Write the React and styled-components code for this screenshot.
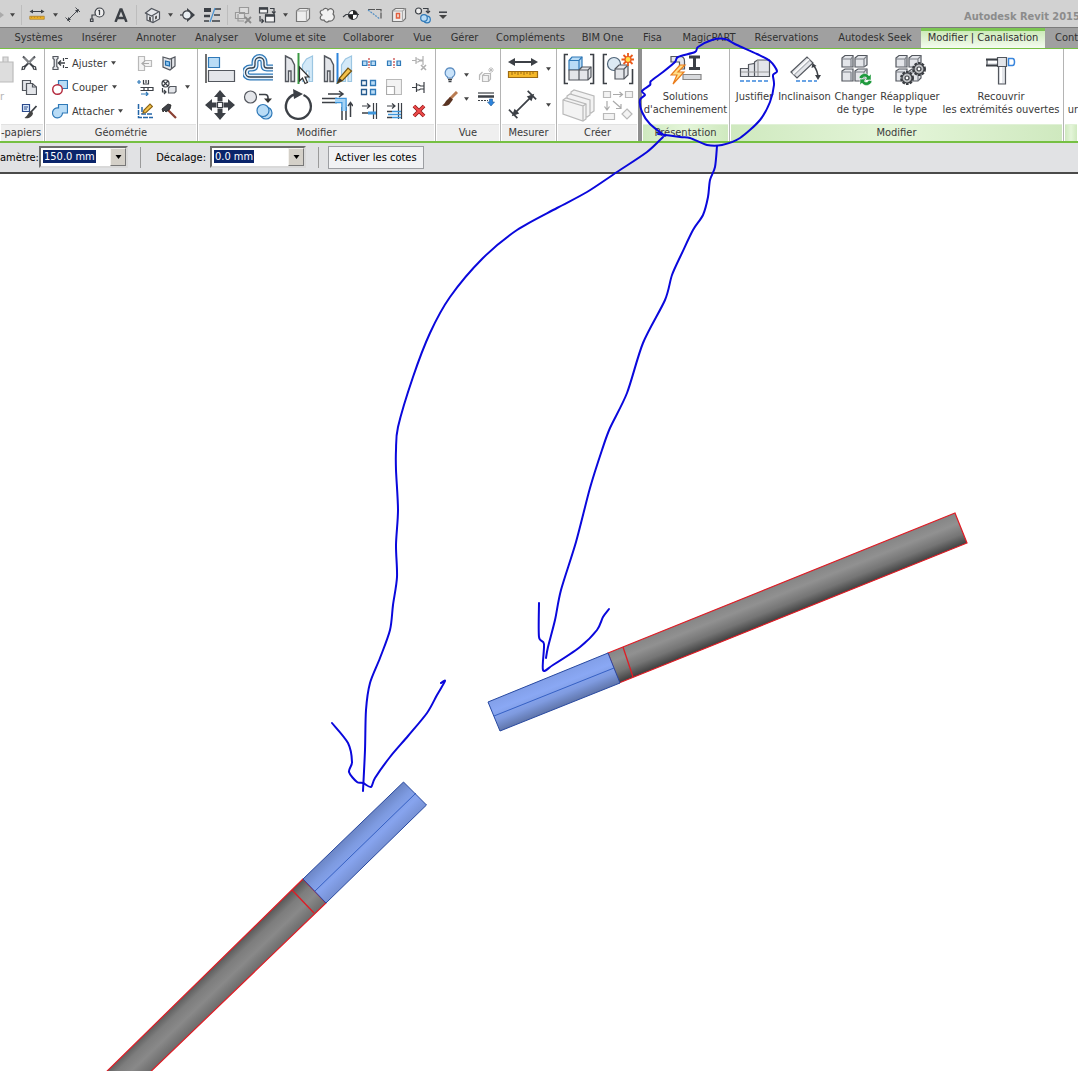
import React from 'react';
import styled, { createGlobalStyle, css } from 'styled-components';

const GlobalStyle = createGlobalStyle`
  * { box-sizing: border-box; }
  body { margin: 0; background: #fff; }
  body, button, input {
    font-family: "DejaVu Sans Condensed", Roboto, "Liberation Sans", sans-serif;
    font-size: 11px;
    line-height: 13px;
  }
  button { margin: 0; padding: 0; border: 0; background: none; color: inherit; white-space: nowrap; }
  svg { display: block; flex: none; }
`;

const Page = styled.div`
  position: relative;
  display: flex;
  flex-direction: column;
  min-height: 100vh;
  overflow: hidden;
  color: #3a3a3a;
`;

/* ---------- quick access bar ---------- */
const QuickBar = styled.header`
  display: flex;
  align-items: center;
  height: 28px;
  padding-top: 3px;
  background: #d2d2d2;
  border-bottom: 1px solid #7c7c7c;
  overflow: hidden;
`;
const QuickButton = styled.button`
  display: flex;
  flex: none;
  align-items: center;
  justify-content: center;
  width: ${(p) => p.$width || 24}px;
  height: 22px;
`;
const ArrowButton = styled.button`
  display: flex;
  flex: none;
  align-items: center;
  justify-content: center;
  width: 12px;
  height: 22px;
`;
const Divider = styled.span`
  flex: none;
  width: 1px;
  height: 20px;
  margin: 0 3px;
  background: #bdbdbd;
`;
const AppTitle = styled.h1`
  flex: none;
  width: 114px;
  margin: 2px 0 0 auto;
  font-size: 11px;
  font-weight: bold;
  color: #8c8c8c;
  white-space: nowrap;
`;

/* ---------- tabs ---------- */
const Tabs = styled.nav`
  display: flex;
  height: 20px;
  padding-left: 5px;
  background: #a0a0a0;
  overflow: hidden;
`;
const Tab = styled.button`
  flex: none;
  width: ${(p) => p.$width}px;
  height: 20px;
  padding: 0 0 1px ${(p) => (p.$clipped ? 10 : 0)}px;
  color: #303030;
  text-align: ${(p) => (p.$clipped ? 'left' : 'center')};
  ${(p) => p.$active && css`
    padding-bottom: 4px;
    border-top: 3px solid #7cc653;
    background: linear-gradient(#cdebb9, #f4fbef);
  `}
`;

/* ---------- ribbon ---------- */
const Ribbon = styled.div`
  display: flex;
  height: 95px;
  border-top: 1px solid #76c043;
  border-bottom: 2px solid #76c043;
  background: #fff;
  overflow: hidden;
`;
const PanelBox = styled.section`
  display: flex;
  flex-direction: column;
  flex: ${(p) => (p.$width ? `0 0 ${p.$width}px` : '1 0 0')};
  min-width: 0;
  border-right: ${(p) => (p.$edge ? '4px solid #8f8f8f' : '1px solid #b4b4b4')};
  &:last-child { border-right: 0; }
`;
const PanelBody = styled.div`
  display: flex;
  align-items: ${(p) => (p.$center ? 'center' : 'flex-start')};
  justify-content: ${(p) => p.$justify || 'flex-start'};
  height: 75px;
  padding: 2px 0 1px ${(p) => p.$inset || 0}px;
  overflow: hidden;
`;
const PanelName = styled.h2`
  height: 17px;
  margin: 0 1px;
  padding: 1px ${(p) => (p.$align ? 4 : 0)}px 0 0;
  background: ${(p) => (p.$green ? 'linear-gradient(90deg, #cfe9bf, #e4f5d9, #cfe9bf)' : '#efefef')};
  border-top: 1px solid ${(p) => (p.$green ? '#e0f1d6' : '#e2e2e2')};
  font-size: 11px;
  font-weight: normal;
  line-height: 13px;
  text-align: ${(p) => p.$align || 'center'};
  white-space: nowrap;
`;
const Column = styled.div`
  display: flex;
  flex-direction: column;
  flex: none;
  width: ${(p) => p.$width}px;
`;
const Row = styled.div`
  display: flex;
  align-items: center;
  gap: ${(p) => p.$gap || 0}px;
  height: 24px;
`;
const TextTool = styled.button`
  display: flex;
  align-items: center;
  gap: 4px;
  height: 24px;
`;
const IconGrid = styled.div`
  display: grid;
  flex: none;
  grid-template-columns: repeat(${(p) => p.$columns}, ${(p) => p.$cell}px);
  grid-auto-rows: ${(p) => p.$row}px;
`;
const IconTool = styled.button`
  display: flex;
  align-items: center;
  justify-content: center;
`;
const BigTool = styled.button`
  display: flex;
  flex-direction: column;
  flex: none;
  align-items: center;
  gap: 4px;
  width: ${(p) => p.$width}px;
  height: 72px;
  padding-top: 3px;
  color: ${(p) => (p.$faint ? '#b4b4b4' : 'inherit')};
  line-height: 13px;
`;

/* ---------- options bar ---------- */
const Options = styled.form`
  display: flex;
  align-items: center;
  height: 31px;
  padding-bottom: 1px;
  background: #e1e2e4;
  border-bottom: 2px solid #4a4a4a;
  color: #000;
`;
const FieldLabel = styled.label`
  flex: none;
  width: ${(p) => p.$width}px;
  padding-right: 4px;
  text-align: right;
  white-space: nowrap;
`;
const Combo = styled.span`
  display: flex;
  flex: none;
  width: ${(p) => p.$width}px;
  height: 22px;
  border: 2px solid;
  border-color: #6c6c6c #d9d9d9 #d9d9d9 #6c6c6c;
  background: #fff;
`;
const ComboText = styled.input`
  field-sizing: content;
  height: 13px;
  margin: 2px auto 0 2px;
  padding: 0 1px;
  border: 0;
  background: #0a246a;
  color: #fff;
`;
const ComboButton = styled.button`
  display: flex;
  align-items: center;
  justify-content: center;
  width: 16px;
  border: 1px solid;
  border-color: #f4f2ee #777 #777 #f4f2ee;
  background: #d4d0c8;
`;
const OptionDivider = styled.span`
  width: 1px;
  height: 21px;
  margin: 0 ${(p) => p.$after}px 0 12px;
  background: #9a9a9a;
`;
const PlainButton = styled.button`
  height: 23px;
  padding: 0 6px;
  border: 1px solid #9c9ea2;
  background: #f1f2f4;
  color: #000;
`;

/* ---------- drawing area ---------- */
const Canvas = styled.main`
  flex: 1 0 0;
  min-height: 0;
  overflow: hidden;
  background: #fff;
`;
const Ink = styled.svg`
  position: absolute;
  top: 0;
  left: 0;
  pointer-events: none;
`;

/* ---------- icons ---------- */
const S = ({ w = 18, h, vb, children }) => (
  <svg width={w} height={h || w} viewBox={vb || `0 0 ${w} ${h || w}`} fill="none" stroke="#3c4046" strokeWidth="1.2" aria-hidden="true">
    {children}
  </svg>
);
const Caret = ({ color = '#444', w = 5 }) => (
  <svg width={w} height="4" viewBox="0 0 6 4" aria-hidden="true"><path d="M0 0h6L3 4z" fill={color} /></svg>
);
const Blue = { fill: '#b9dcf6', stroke: '#2f79b8' };
const Grey = { fill: '#e4e6ea', stroke: '#53575e' };
const Faint = { fill: '#f3f3f3', stroke: '#b9b9b9' };

const Ruler = ({ w }) => (
  <S w={w} h={w * 0.75} vb="0 0 32 24">
    <path d="M4 5h24" strokeWidth="2" />
    <path d="M1 5l7-4v8zM31 5l-7-4v8z" fill="#3c4046" stroke="none" />
    <path d="M1.500 14.500h29v6h-29z" fill="#f5b829" stroke="#9d6b12" />
    <path d="M5 15v3M8 15v2M11 15v3M14 15v2M17 15v3M20 15v2M23 15v3M26 15v2" stroke="#9d6b12" strokeWidth="1" />
  </S>
);
const Dimension = ({ w }) => (
  <S w={w} vb="0 0 32 32">
    <path d="M7 25L25 7M1 21l9 9M21 1l9 9" strokeWidth="1.800" />
    <path d="M4 28l3-8 5 5zM28 4l-3 8-5-5z" fill="#3c4046" stroke="none" />
  </S>
);
const TagIcon = () => (
  <S w={16}><circle cx="10.500" cy="5.500" r="4.500" fill="#eee" /><path d="M10.500 3v5M9.500 4l1-1" /><path d="M6.500 8H3V12" /><path d="M1.500 12h2.500v2.500H1.500z" /></S>
);
const LetterIcon = () => (
  <S w={14}><path d="M1.500 14L6.500 1.500h1L12.500 14M4 10h6" strokeWidth="2.400" /></S>
);
const HouseIcon = () => (
  <S w={17}><path d="M1.500 6l6-4.500 8 3.500v7L9 15.500 3 13V7z" {...Grey} /><path d="M1.500 6l6 3 7-4M9 9v6.500" stroke="#53575e" /><path d="M5 9.500v4l2 .8v-4zM11 9.500l2-1v3l-2 1z" fill="#555" stroke="none" /></S>
);
const SectionIcon = () => (
  <S w={16}><path d="M7 1l8 7-8 7z" fill="#3c4046" stroke="none" /><circle cx="7" cy="8" r="4.200" fill="#e9eef2" /><path d="M0 8h3" /></S>
);
const ThinLines = () => (
  <S w={18} h={16}><path d="M1 3h7" strokeWidth="4" /><path d="M1 9h6" strokeWidth="2.500" /><path d="M1 14h5M12 2h6M11 8h6M9 14h8" strokeWidth="1.500" /><path d="M12 1L7 15" stroke="#4a94d4" /></S>
);
const CloseWindows = () => (
  <S w={18}><path d="M5.500 1.500h9v6h-9zM1.500 6.500h9v6h-9z" fill="#ddd" stroke="#999" /><path d="M4 8v7h6" stroke="#999" /><path d="M11 11l6 6M17 11l-6 6" stroke="#8a8a8a" strokeWidth="1.800" /></S>
);
const SwitchWindows = () => (
  <S w={18}><path d="M1.500 2h8v5h-8zM7.500 9h9v7h-9z" fill="#f3f3f3" /><path d="M1 2.500h9M7 9.500h10" strokeWidth="2.500" /><path d="M12 2.500h4v5M14 5.500l2 2 1.500-2M2 10v5h3M3.500 13l2 2-2 2" /></S>
);
const CubeIcon = ({ red }) => (
  <S w={16}><path d="M1.500 4l3-2.500h10v10l-3 3h-10z" fill="#ededed" stroke="#777" /><path d="M1.500 4h10v10.500M11.500 4l3-2.500" stroke="#aaa" />{red && <path d="M5.500 6.500h3v4.500H5.500z" stroke="#e2603f" strokeWidth="1.500" />}</S>
);
const CloudIcon = () => (
  <S w={17}><path d="M4 3c2-3 5-1 5 0 3-3 7 0 5 4 3 3 0 8-4 7-2 2-4 1-5-1-4 1-5-3-2-5C0 6 1 3 4 3z" fill="#f1f1f1" stroke="#666" /></S>
);
const LevelIcon = () => (
  <S w={18}><circle cx="11" cy="9" r="4.500" fill="#fff" /><path d="M11 9V4.500A4.500 4.500 0 0 1 15.500 9zM11 9v4.500A4.500 4.500 0 0 1 6.500 9z" fill="#222" stroke="none" /><path d="M1 11l3-2.500h13" /></S>
);
const DashIcon = () => (
  <S w={16}><path d="M1 2.500h13v9" stroke="#555" strokeDasharray="7 1" /><path d="M1 3l12 9" stroke="#5590c4" strokeDasharray="2 1" /></S>
);
const CirclesIcon = () => (
  <S w={18}><circle cx="4.500" cy="5" r="3" fill="#eee" /><path d="M9 2.500h5v4M12 5l2 2 2-2" /><circle cx="13" cy="13.500" r="3.300" {...Blue} /><circle cx="10" cy="12" r="3.300" {...Blue} /></S>
);
const MoreIcon = () => (
  <S w={8} h={8}><path d="M0 1.200h8" strokeWidth="1.500" /><path d="M0 4h8L4 8z" fill="#444" stroke="none" /></S>
);
const RedoEnd = () => (
  <S w={6} h={10}><path d="M0 2l4 3-4 3z" fill="#aaa" stroke="none" /></S>
);

const CutIcon = () => <S w={16}><path d="M2 1.500L12.500 12M14 1.500L3.500 12" strokeWidth="2" /><path d="M3 2.500l6 6M13 2.500l-6 6" stroke="#fff" strokeWidth=".7" /><path d="M12 11l2.500 1 .5 2.500-2.500-.5zM4 11l-2.500 1-.5 2.500 2.500-.5z" /></S>;
const CopyIcon = () => <S w={16}><path d="M1.500 1.500h8v10h-8z" {...Grey} /><path d="M5.500 4.500h6l4 3.500v7.500h-10z" {...Grey} /><path d="M11.500 4.500V8h4" stroke="#53575e" /></S>;
const MatchIcon = () => <S w={16}><path d="M1.500 1.500h7v7h-7z" fill="#dcebfa" stroke="#2b4a8c" /><path d="M3 4h4M3 6h3" stroke="#2b4a8c" /><path d="M15.500 3L10 9" strokeWidth="1.800" /><path d="M10.500 8c-3 0-3 4-7 7 4 1 8-1 8.500-5z" fill="#444" stroke="none" /></S>;
const CopeIcon = () => <S w={16}><path d="M1 1.500h5v2L4.800 4.500v7L6 12.500v2H1v-2l1.200-1v-7L1 3.500z" {...Grey} /><path d="M16 3.500h-4.500v3M16 12.500h-4.500v-3" strokeDasharray="3 1" /><path d="M6.500 8H13M9 5.500L6.500 8 9 10.500" strokeWidth="1.500" /></S>;
const CutGeometry = () => <S w={16}><path d="M6.500 1.500h9v8h-9z" {...Blue} /><circle cx="5.500" cy="10.500" r="4.800" fill="#fff" stroke="#b3283c" strokeWidth="1.400" /></S>;
const JoinGeometry = () => <S w={16}><path d="M6.500 1.500h9v8.500h-5a5 5 0 1 1-4-5z" {...Blue} /></S>;
const WallJoin = () => <S w={16}><path d="M1.500 1.500h6v4h7v6h-7v4h-6z" {...Faint} /><path d="M12 8.500H5M8 6L5 8.500 8 11" stroke="#aaa" /></S>;
const FaceIcon = () => <S w={16}><path d="M2 2l7 2 5-2v9l-5 4-7-3z" {...Grey} /><path d="M4.500 6l4 1v4l-4-1z" fill="#8cc6f2" stroke="#1f6cab" /><path d="M10.500 4v10" stroke="#53575e" /></S>;
const BeamIcon = () => <S w={18}><path d="M1 4h4M3 2v4" stroke="#2f79b8" /><path d="M7.500 2v4h5V2M10 2v3M4.500 9.500H17v3H4.500M8 9.500v3M12 9.500v3" /><path d="M5 16h7M10 14l2 2-2 2" stroke="#2f79b8" /></S>;
const SplitFace = () => <S w={16}><circle cx="4.500" cy="4.500" r="3.500" /><path d="M2 2l5 5M7 2L2 7" /><path d="M7.500 9l1.500-1.500h6v5L13.500 14h-6z" {...Grey} /><path d="M1.500 9v4h3M3 11l2 2-2 2" /></S>;
const WallPencil = () => <S w={16}><path d="M1.500 1v13.500H16M5 4v7h11" stroke="#2466a8" strokeWidth="1.500" strokeDasharray="5 1" /><path d="M6 10l1-3 6-6 2.500 2.500-6.500 6z" fill="#f3c24b" stroke="#8d6516" /></S>;
const HammerIcon = () => <S w={16}><path d="M6 6l9 9" stroke="#8a4033" strokeWidth="2.200" /><path d="M1 6l6-5 3 1-1 4-4 3-1.500-1.500L2 9z" fill="#3f4247" stroke="#222" strokeWidth=".8" /></S>;

const AlignIcon = () => <S w={32}><path d="M2 1v29" stroke="#111" /><path d="M4.500 4.500h11v10h-11z" {...Blue} /><path d="M4.500 17.500h26v11h-26z" {...Grey} /></S>;
const offsetCurve = 'M30 24H7a4.500 4.500 0 0 1 0-9h2q3 0 3-3V9a4.500 4.500 0 0 1 9 0v3q0 3 3 3h6';
const OffsetIcon = () => <S w={32}><path d={offsetCurve} stroke="#2f79b8" strokeWidth="7" /><path d={offsetCurve} stroke="#e8f3fc" strokeWidth="4.500" /><path d={offsetCurve} stroke="#34414e" strokeWidth="1.300" /></S>;
const MirrorIcon = ({ pencil }) => <S w={32}><path d="M3.500 3l6 3 3 6v16.500H9V18H6.500v10.500h-3z" {...Grey} strokeWidth="1.400" /><path d="M30.500 3l-6 3-4 6v16.500h4V18H27v10.500h3.500z" fill="#d3e9f8" stroke="#9cc6e2" /><path d="M16.500 0v31" stroke={pencil ? '#2d84dc' : '#3b9a44'} strokeWidth="2" />{pencil ? <g><path d="M16.500 30l2-5L27 15l3.500 3-9 9.500z" fill="#f3c24b" stroke="#75540f" /><path d="M16.500 30l2-5 3 2.500z" fill="#333" stroke="none" /></g> : <path d="M17.500 14v14l3-3 2.500 5.500 2.500-1-2.500-5.500h4z" fill="#fff" stroke="#333" />}</S>;
const MoveIcon = () => <S w={32}><path d="M16 1l6 7h-3.500v4.500h-5V8H10zM16 31l6-7h-3.500v-4.500h-5V24H10zM1 16l7-6v3.500h4.500v5H8V22zM31 16l-7-6v3.500h-4.500v5H24V22z" fill="#3c4046" stroke="none" /><path d="M13.500 13.500h5v5h-5z" fill="#fff" /></S>;
const CopyShapes = () => <S w={32}><circle cx="7.500" cy="8" r="6" {...Grey} /><path d="M16 5.500h6q3 0 3 3v2" strokeWidth="1.600" /><path d="M21 9.500h8l-4 4.500z" fill="#333" stroke="none" /><circle cx="23" cy="24" r="6" {...Blue} /><circle cx="20" cy="21.500" r="6" {...Blue} /></S>;
const RotateIcon = () => <S w={32}><path d="M21.500 6a12.500 12.500 0 1 1-9-.5" strokeWidth="2.400" /><path d="M11 0l10 5-9 5z" fill="#3c4046" stroke="none" /></S>;
const TrimIcon = () => <S w={32}><path d="M1 9.500h15M1 13.500h15M21 18v13M25 18v13" strokeWidth="1.500" /><path d="M14 11.500h9V22" stroke="#3f97dc" strokeWidth="5.500" /><path d="M14 11.500h9V22" stroke="#a7d4f5" strokeWidth="3" /><path d="M7 5h14M18 2l4 3-4 3M29.500 28V14M27 17l2.500-3.500L32 17" strokeWidth="1.500" /></S>;
const SplitIcon = ({ gap }) => <S w={16}><path d={gap ? 'M1.500 6H5v4.500H1.500zM11 6h3.500v4.500H11z' : 'M1.500 6H6v4.500H1.500zM10 6h4.500v4.500H10z'} {...Blue} /><path d="M8 3v10" stroke="#c43c3c" strokeDasharray="2 1" /></S>;
const PinIcon = ({ off }) => <S w={16}>{off ? <g stroke="#b0b0b0"><path d="M1 5.500h4M5 2v7M12 1v9M5 4h2l1.500 1H12M5 7h2l1.500-1H12" /><path d="M10 10l5 5M15 10l-5 5" strokeWidth="1.600" /></g> : <path d="M1 8.500h4M5.500 4v9M13 3v11M5.500 6H8l1.500 1H13M5.500 11H8l1.500-1H13" />}</S>;
const ArrayIcon = () => <S w={17}><path d="M1.500 1.500h5v5h-5zM1.500 10.500h5v5h-5z" fill="#eef4f9" stroke="#245a8e" strokeWidth="1.300" /><path d="M10.500 1.500h5v5h-5zM10.500 10.500h5v5h-5z" {...Blue} strokeWidth="1.300" /></S>;
const ScaleIcon = () => <S w={16}><path d="M.5.500h15v15H.5z" {...Faint} /><path d="M.5 7.500h8v8h-8z" fill="#fff" stroke="#aaa" /></S>;
const TrimOne = ({ many }) => <S w={18}><path d="M2 4h8M7 1.500L10 4 7 6.500M13.500 1v16M16.500 1v16" /><path d={many ? 'M2 9.500h5M2 15.500h5' : 'M2 11h6'} strokeWidth="1.500" /><path d={many ? 'M7 9.500h9M7 15.500h9M3 12.500h13' : 'M8 11h8'} stroke="#3f97dc" strokeWidth={many ? 1.4 : 3} /></S>;
const DeleteIcon = () => <S w={14}><path d="M2 2l10 10M12 2L2 12" stroke="#8f1a1a" strokeWidth="3.800" /><path d="M2 2l10 10M12 2L2 12" stroke="#ee4a4a" strokeWidth="2.200" /></S>;
const BulbIcon = () => <S w={16}><path d="M8 .8a5 5 0 0 1 2.500 9.200V11h-5v-1A5 5 0 0 1 8 .8z" fill="#c9e3fa" stroke="#5b8cc0" /><path d="M6 12.500h4M6.500 14.500h3" strokeWidth="1.500" /></S>;
const HideIcon = () => <S w={16}><path d="M4.500 8.500h6v6h-6zM4.500 8.500l2-2h6v5.500l-2 2.500M1.500 13V8l3-3" {...Faint} /><path d="M13 0v6M10 3h6M11 1l4 4M15 1l-4 4" stroke="#b5b5b5" strokeWidth=".8" /></S>;
const BrushIcon = () => <S w={16}><path d="M15 1L8 8" stroke="#b97c52" strokeWidth="3" /><path d="M8 6L4 10c-1 2-2 3-4 4.500 4 1 7 0 8-2l3-4z" fill="#593322" stroke="none" /></S>;
const LineStyle = () => <S w={18}><path d="M1 3h16" strokeWidth="1.200" /><path d="M1 6.500h16" strokeWidth="2.500" /><path d="M1 10.500h10" strokeDasharray="2 1" /><path d="M12.500 9h3v3h2L14 16l-3.500-4h2z" fill="#2d84dc" stroke="#1b5a9c" strokeWidth=".6" /></S>;
const GroupIcon = () => <S w={32}><path d="M5 1.500H1.500v29H5M27 1.500h3.500v29H27" strokeWidth="1.600" /><path d="M6 7.500L9 4h10v10l-3 3H6z" {...Blue} /><path d="M6 7.500h10L19 4M16 7.500V17" stroke="#2f79b8" /><path d="M6 17h10v10H6zM16 17l3-3h9v10l-3 3h-9z" {...Grey} /><path d="M16 17h9v10M25 17l3-3" stroke="#53575e" /></S>;
const AssemblyIcon = () => <S w={32}><path d="M5 1.500H1.500v29H5M27 30.500h3.500V16" strokeWidth="1.600" /><circle cx="12" cy="11" r="6.500" fill="#dce9f3" stroke="#4f6478" /><path d="M13 16l4-4h9v10l-4 4h-9z" {...Grey} /><path d="M13 16h9v10M22 16l4-4" stroke="#53575e" /><path d="M26 0v13M19.500 6.500h12.500M21.500 2l9 9M30.500 2l-9 9" stroke="#ea5a1b" strokeWidth="1.800" /><circle cx="26" cy="6.500" r="3" fill="#ffe14a" stroke="#ea5a1b" /></S>;
const PartsIcon = () => <S w={34}><path d="M9 4l3-2 20 6v15l-3 2-20-6z" {...Faint} /><path d="M5 8l3-2 20 6v15l-3 2-20-6z" {...Faint} /><path d="M1 12l3-2 20 6v15l-3 2L1 26z" {...Faint} /><path d="M1 12l20 6v15M21 18l3-2" stroke="#b9b9b9" /></S>;
const GraphIcon = () => <S w={32}><path d="M1.500 2.500h7v6h-7zM23.500 2.500h7v6h-7zM1.500 24.500h11v6h-11zM25 20l5 5-5 5-5-5z" {...Faint} /><path d="M11 5.500h9M17.500 3l3 2.500-3 2.500M5 12v8M2.500 17.500L5 21l2.500-3.500M11 12l8 7M19 15v4.500h-5" stroke="#aaa" /></S>;
const RouteIcon = () => <S w={32}><path d="M1 2.500h9q4.500 0 4.500 4.500v8h-5V8H1z" {...Grey} /><path d="M19 3h11M19 14.500h11M24.500 3v12" strokeWidth="3" /><path d="M13 20.500h18v5H13z" fill="#d8dadd" stroke="#888" /><path d="M10 11L1 21h6l-4 9 11-12H8l7-7z" fill="#ffe08a" stroke="#ea7d1c" /></S>;
const JustifyIcon = () => <S w={32}><path d="M1.500 14.500h8v8h-8zM9.500 10.500l6-1v13h-6zM15.500 8l3-2h12v16.500h-15z" {...Grey} /><path d="M2 18h28M19 6v16" stroke="#999" /><path d="M1 27h30" stroke="#3a86dd" strokeWidth="1.500" strokeDasharray="4 2" /></S>;
const SlopeIcon = () => <S w={32}><path d="M2 18L18 3l6 6L8 24z" {...Grey} /><path d="M5 21L21 6" stroke="#aeb2b8" /><path d="M4 20L20 5" stroke="#fff" /><path d="M7 27h21" stroke="#3a86dd" strokeWidth="1.500" strokeDasharray="4 2" /><path d="M25 12c3 4 4 7 4 12" strokeWidth="1.500" /><path d="M22.500 14l1-5 4 3zM26 21h6l-3 5z" fill="#3c4046" stroke="none" /></S>;
const Cubes = () => <g><path d="M2 4l3-2.500h8V13H2zM15 4l3-2.500h9V11l-3 2h-9zM2 17l3-2h8v12H2zM15 17l3-2h9v9l-3 3h-9z" {...Grey} /><path d="M2 5h9l2-3M15 5h9l3-3M24 5v8M2 18h9M11 5v8M11 18v9M15 18h9l3-3M24 18v9" stroke="#7b7f86" /></g>;
const ChangeType = () => <S w={32}><Cubes /><path d="M19 24c1-5 8-6 10-2l2-2v6h-6l2-2c-2-2-4-1-5 1zM32 27c-1 5-8 6-10 2l-2 2v-6h6l-2 2c2 2 4 1 5-1z" fill="#1f9a3d" stroke="#fff" strokeWidth=".5" /></S>;
const Gear = ({ x, y }) => <g transform={`translate(${x} ${y})`}><circle r="6" stroke="#3a3d42" strokeWidth="2" strokeDasharray="2.600 1.200" /><circle r="5" fill="#bfc1c4" stroke="#3a3d42" /><circle r="2" fill="#fff" stroke="#3a3d42" /></g>;
const ReapplyType = () => <S w={32}><Cubes /><Gear x={25} y={15} /><Gear x={13} y={24} /></S>;
const CapIcon = () => <S w={32}><path d="M2 5.500h12v6H2z" {...Grey} /><path d="M13.500 10h7v20h-7z" {...Grey} /><path d="M12.500 3.500h9v9h-9z" {...Grey} /><path d="M3 8h9M16 13v16" stroke="#fff" strokeWidth="2" /><path d="M1 5.500h12M1 11.500h12" strokeWidth="1.800" /><path d="M23.500 4.500h4q2 0 2 3.500t-2 3.500h-4z" fill="#fff" stroke="#3a86dd" strokeWidth="1.500" /></S>;
const PasteIcon = () => <S w={32}><path d="M9 8h18v20H9zM17 8V3h5v5" fill="#ddd" stroke="#bbb" /></S>;

/* ---------- data ---------- */
const tabs = [
  ['Systèmes', 67], ['Insérer', 54], ['Annoter', 60], ['Analyser', 61], ['Volume et site', 87],
  ['Collaborer', 69], ['Vue', 39], ['Gérer', 45], ['Compléments', 87], ['BIM One', 57],
  ['Fisa', 43], ['MagicPART', 70], ['Réservations', 85], ['Autodesk Seek', 92],
  ['Modifier | Canalisation', 124], ['Cont', 60],
];
const modifyBig = [
  ['Aligner', AlignIcon], ['Décaler', OffsetIcon], ['Symétrie', MirrorIcon],
  ['Symétrie dessinée', () => <MirrorIcon pencil />],
  ['Déplacer', MoveIcon], ['Copier', CopyShapes], ['Rotation', RotateIcon], ['Ajuster', TrimIcon],
];
const modifySmall = [
  ['Scinder', SplitIcon], ['Scinder avec espace', () => <SplitIcon gap />], ['Libérer', () => <PinIcon off />],
  ['Réseau', ArrayIcon], ['Échelle', ScaleIcon], ['Verrouiller', PinIcon],
  ['Prolonger', TrimOne], ['Prolonger plusieurs', () => <TrimOne many />], ['Supprimer', DeleteIcon],
];
const geometry = [['Ajuster', CopeIcon], ['Couper', CutGeometry], ['Attacher', JoinGeometry]];
const layoutTools = [
  [['Justifier'], JustifyIcon, 47], [['Inclinaison'], SlopeIcon, 53], [['Changer', 'de type'], ChangeType, 49],
  [['Réappliquer', 'le type'], ReapplyType, 60], [['Recouvrir', 'les extrémités ouvertes'], CapIcon, 122],
];

const strokes = [
  [[665, 136], [650, 124], [642, 112], [640, 100], [645, 95], [642, 91], [650, 85], [651, 81], [663, 72], [675, 62], [678, 57], [695, 52], [698, 47], [712, 40], [725, 39], [737, 45], [757, 54], [770, 61], [777, 71], [773, 75], [774, 85], [770, 102], [760, 120], [740, 138], [722, 145], [707, 145], [690, 138], [680, 137], [658, 134]],
  [[663, 137], [647, 152], [617, 172], [587, 192], [557, 208], [517, 230], [483, 258], [450, 297], [430, 333], [413, 377], [398, 427], [396, 450], [396, 470], [398, 510], [396, 545], [397, 577], [393, 605], [390, 630], [380, 658], [370, 683], [366, 710], [365, 750], [363, 791]],
  [[717, 146], [715, 167], [710, 180], [708, 197], [703, 215], [693, 230], [682, 253], [672, 275], [665, 300], [643, 343], [627, 393], [610, 428], [602, 450], [590, 488], [576, 542], [561, 590], [555, 620], [548, 647], [546, 658]],
  [[539, 603], [539, 637], [544, 644], [543, 670], [553, 665], [580, 647], [597, 630], [603, 617], [609, 609]],
  [[332, 723], [348, 743], [352, 762], [349, 772], [357, 782], [363, 783], [371, 787], [375, 778], [390, 757], [408, 736], [427, 713], [437, 695], [445, 681], [441, 683]],
];
const smooth = (pts) => pts.slice(1).reduce((d, p, i) => {
  const a = pts[Math.max(i - 1, 0)];
  const b = pts[i];
  const c = pts[Math.min(i + 2, pts.length - 1)];
  return `${d}C${b[0] + (p[0] - a[0]) / 7} ${b[1] + (p[1] - a[1]) / 7} ${p[0] - (c[0] - b[0]) / 7} ${p[1] - (c[1] - b[1]) / 7} ${p[0]} ${p[1]}`;
}, `M${pts[0]}`);

const Panel = ({ name, width, edge, green, align, children, ...body }) => (
  <PanelBox $width={width} $edge={edge}>
    <PanelBody {...body}>{children}</PanelBody>
    <PanelName $green={green} $align={align}>{name}</PanelName>
  </PanelBox>
);
const Tool = ({ label, icon: Icon }) => (
  <IconTool type="button" aria-label={label}><Icon /></IconTool>
);
const Quick = ({ label, icon: Icon, width }) => (
  <QuickButton type="button" aria-label={label} $width={width}><Icon /></QuickButton>
);
const Drop = () => <ArrowButton type="button" aria-label="Options"><Caret /></ArrowButton>;

function Drawing() {
  return (
    <svg width="1078" height="897" viewBox="0 174 1078 897" role="img" aria-label="Canalisations">
      <defs>
        <linearGradient id="pipeA" gradientUnits="userSpaceOnUse" x1="608" y1="653" x2="620" y2="683">
          <stop offset="0" stopColor="#868686" /><stop offset=".3" stopColor="#919191" /><stop offset=".65" stopColor="#757575" /><stop offset="1" stopColor="#3c3c3c" />
        </linearGradient>
        <linearGradient id="blueA" gradientUnits="userSpaceOnUse" x1="608" y1="653" x2="620" y2="683">
          <stop offset="0" stopColor="#829fe8" /><stop offset=".35" stopColor="#8aa8f4" /><stop offset=".65" stopColor="#7f9be0" /><stop offset="1" stopColor="#5f75aa" />
        </linearGradient>
        <linearGradient id="pipeB" gradientUnits="userSpaceOnUse" x1="303" y1="879" x2="326" y2="903">
          <stop offset="0" stopColor="#555" /><stop offset=".3" stopColor="#7d7d7d" /><stop offset=".6" stopColor="#898989" /><stop offset="1" stopColor="#6c6c6c" />
        </linearGradient>
        <linearGradient id="blueB" gradientUnits="userSpaceOnUse" x1="303" y1="879" x2="326" y2="903">
          <stop offset="0" stopColor="#6c86c6" /><stop offset=".3" stopColor="#7d9ae0" /><stop offset=".6" stopColor="#87a4ee" /><stop offset="1" stopColor="#7690d2" />
        </linearGradient>
      </defs>
      <path d="M608 653L955 513l12 30-348 140z" fill="url(#pipeA)" stroke="#e01b24" strokeWidth="1.200" />
      <path d="M623 647l10 30" stroke="#e01b24" strokeWidth="1.300" />
      <path d="M488 702l120-49 12 30-120 48z" fill="url(#blueA)" stroke="#2748a0" />
      <path d="M494 716l120-48" stroke="#3560c4" />
      <path d="M303 879L98 1080h44L326 903z" fill="url(#pipeB)" stroke="#e01b24" strokeWidth="1.200" />
      <path d="M292 890l22 23" stroke="#e01b24" strokeWidth="1.300" />
      <path d="M403.500 782l23 23L326 903l-23-24z" fill="url(#blueB)" stroke="#2748a0" />
      <path d="M416 793L315 891" stroke="#3560c4" />
    </svg>
  );
}

export default function App() {
  return (
    <Page>
      <GlobalStyle />
      <QuickBar>
        <Quick label="Rétablir" icon={RedoEnd} width={6} />
        <Drop />
        <Divider />
        <Quick label="Mesurer" icon={() => <Ruler w={16} />} />
        <Drop />
        <Quick label="Cote alignée" icon={() => <Dimension w={16} />} />
        <Quick label="Étiquette" icon={TagIcon} />
        <Quick label="Texte" icon={LetterIcon} />
        <Divider />
        <Quick label="Vue 3D" icon={HouseIcon} />
        <Drop />
        <Quick label="Coupe" icon={SectionIcon} />
        <Quick label="Lignes fines" icon={ThinLines} />
        <Divider />
        <Quick label="Fermer les fenêtres" icon={CloseWindows} />
        <Quick label="Changer de fenêtre" icon={SwitchWindows} />
        <Drop />
        <Quick label="Volume" icon={CubeIcon} />
        <Quick label="Nuage" icon={CloudIcon} />
        <Quick label="Niveau" icon={LevelIcon} />
        <Quick label="Plan" icon={DashIcon} />
        <Quick label="Ouverture" icon={() => <CubeIcon red />} />
        <Quick label="Copier" icon={CirclesIcon} />
        <Quick label="Personnaliser" icon={MoreIcon} width={16} />
        <AppTitle>Autodesk Revit 2015</AppTitle>
      </QuickBar>

      <Tabs>
        {tabs.map(([name, width]) => (
          <Tab key={name} type="button" $width={width} $active={name.startsWith('Modifier')} $clipped={name === 'Cont'}>{name}</Tab>
        ))}
      </Tabs>

      <Ribbon>
        <Panel name="-papiers" width={45} align="right" $justify="space-between">
          <Column $width={14}>
            <BigTool type="button" $width={4} $faint><PasteIcon /><span>r</span></BigTool>
          </Column>
          <IconGrid $columns={1} $cell={30} $row={24}>
            <Tool label="Couper" icon={CutIcon} />
            <Tool label="Copier" icon={CopyIcon} />
            <Tool label="Copier le type" icon={MatchIcon} />
          </IconGrid>
        </Panel>
        <Panel name="Géométrie" width={153} $inset={7}>
          <Column $width={81}>
            {geometry.map(([name, Icon]) => (
              <Row key={name} $gap={4}>
                <TextTool type="button"><Icon />{name}</TextTool>
                <Caret />
              </Row>
            ))}
          </Column>
          <IconGrid $columns={2} $cell={24} $row={24}>
            <Tool label="Joindre les murs" icon={WallJoin} />
            <Tool label="Scinder la face" icon={FaceIcon} />
            <Tool label="Poutres" icon={BeamIcon} />
            <Tool label="Attache" icon={SplitFace} />
            <Tool label="Profil" icon={WallPencil} />
            <Tool label="Démolir" icon={HammerIcon} />
          </IconGrid>
          <Column $width={12}><Row /><Row><Drop /></Row></Column>
        </Panel>
        <Panel name="Modifier" width={238} $inset={2}>
          <IconGrid $columns={4} $cell={39} $row={36}>
            {modifyBig.map(([label, icon]) => <Tool key={label} label={label} icon={icon} />)}
          </IconGrid>
          <IconGrid $columns={3} $cell={25} $row={24}>
            {modifySmall.map(([label, icon]) => <Tool key={label} label={label} icon={icon} />)}
          </IconGrid>
        </Panel>
        <Panel name="Vue" width={65} $inset={4} $center>
          <IconGrid $columns={1} $cell={20} $row={24}>
            <Tool label="Masquer" icon={BulbIcon} />
            <Tool label="Remplacer" icon={BrushIcon} />
          </IconGrid>
          <Column $width={12}><Row><Drop /></Row><Row><Drop /></Row></Column>
          <IconGrid $columns={1} $cell={28} $row={24}>
            <Tool label="Isoler" icon={HideIcon} />
            <Tool label="Style de ligne" icon={LineStyle} />
          </IconGrid>
        </Panel>
        <Panel name="Mesurer" width={56} $inset={2}>
          <IconGrid $columns={1} $cell={39} $row={36}>
            <Tool label="Mesurer" icon={() => <Ruler w={32} />} />
            <Tool label="Cote" icon={() => <Dimension w={30} />} />
          </IconGrid>
          <IconGrid $columns={1} $cell={12} $row={36}>
            <Tool label="Options de mesure" icon={Caret} />
            <Tool label="Options de cote" icon={Caret} />
          </IconGrid>
        </Panel>
        <Panel name="Créer" width={85} edge $inset={2}>
          <IconGrid $columns={2} $cell={39} $row={36}>
            <Tool label="Groupe" icon={GroupIcon} />
            <Tool label="Assemblage" icon={AssemblyIcon} />
            <Tool label="Pièces" icon={PartsIcon} />
            <Tool label="Similaire" icon={GraphIcon} />
          </IconGrid>
        </Panel>
        <Panel name="Présentation" width={88} green $justify="center">
          <BigTool type="button" $width={84}><RouteIcon /><span>Solutions<br />d'acheminement</span></BigTool>
        </Panel>
        <Panel name="Modifier" width={334} green $inset={1}>
          {layoutTools.map(([lines, Icon, width]) => (
            <BigTool key={lines[0]} type="button" $width={width}>
              <Icon />
              <span>{lines[0]}{lines[1] && <br />}{lines[1]}</span>
            </BigTool>
          ))}
        </Panel>
        <Panel name="" green $inset={3}>
          <BigTool type="button" $width={12}><S w={32} /><span><br />ur</span></BigTool>
        </Panel>
      </Ribbon>

      <Options>
        <FieldLabel htmlFor="diameter" $width={39}>amètre:</FieldLabel>
        <Combo $width={89}>
          <ComboText id="diameter" defaultValue="150.0 mm" />
          <ComboButton type="button" aria-label="Choisir le diamètre"><Caret color="#000" w={7} /></ComboButton>
        </Combo>
        <OptionDivider $after={12} />
        <FieldLabel htmlFor="offset" $width={57}>Décalage:</FieldLabel>
        <Combo $width={96}>
          <ComboText id="offset" defaultValue="0.0 mm" />
          <ComboButton type="button" aria-label="Choisir le décalage"><Caret color="#000" w={7} /></ComboButton>
        </Combo>
        <OptionDivider $after={9} />
        <PlainButton type="button">Activer les cotes</PlainButton>
      </Options>

      <Canvas><Drawing /></Canvas>

      <Ink width="1078" height="1071" viewBox="0 0 1078 1071" fill="none" stroke="#0a08dc" strokeWidth="2" strokeLinecap="round" strokeLinejoin="round" aria-hidden="true">
        {strokes.map((pts) => <path key={pts[0].join()} d={smooth(pts)} />)}
      </Ink>
    </Page>
  );
}
